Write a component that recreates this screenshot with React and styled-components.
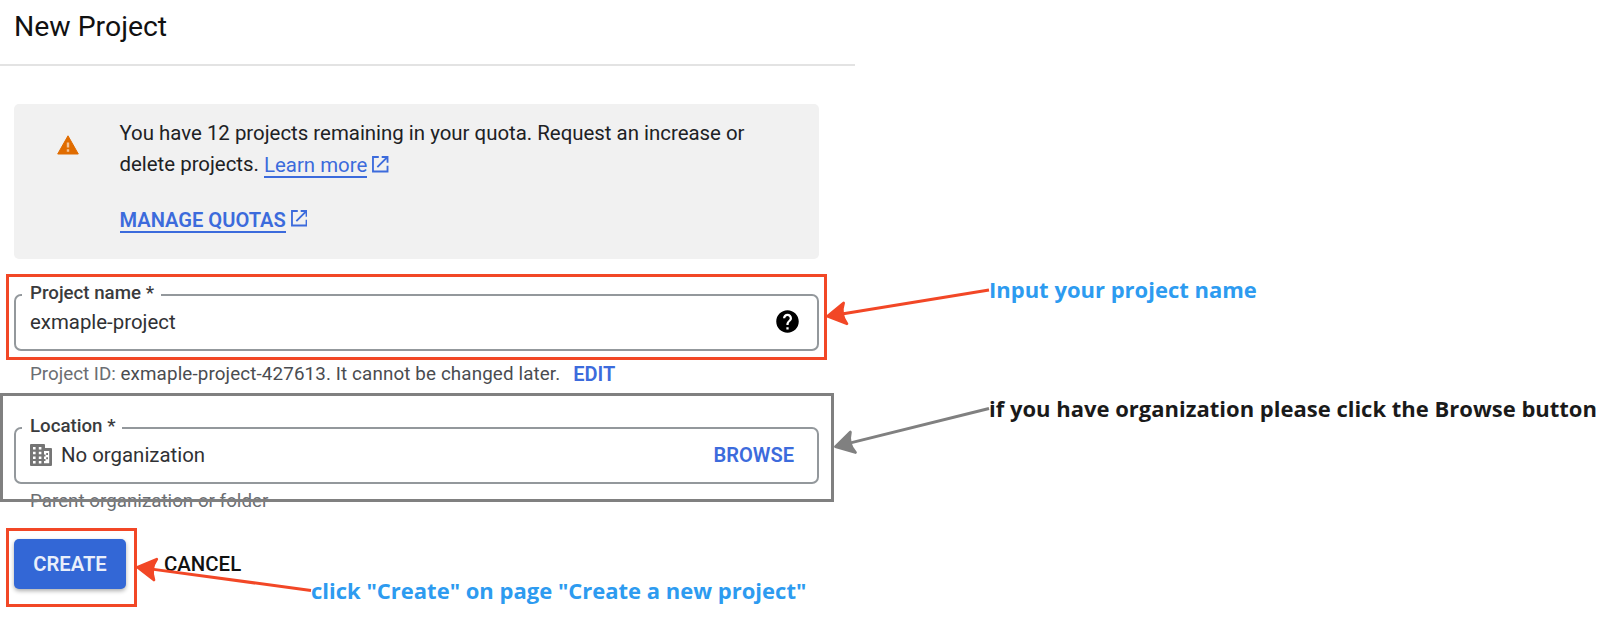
import React from "react";
import styled, { createGlobalStyle } from "styled-components";

const Global = createGlobalStyle`
  *, *::before, *::after { box-sizing: border-box; }
  body { margin: 0; background: #fff; font-family: Roboto, "Liberation Sans", sans-serif; color: #202124; }
`;

const Canvas = styled.div`
  position: relative;
  width: 1598px;
  height: 625px;
  overflow: hidden;
`;

const Page = styled.main`
  width: 855px;
`;

const Header = styled.header`
  height: 66px;
  padding: 10px 0 0 14px;
  border-bottom: 2px solid #e3e3e3;
`;

const Title = styled.h1`
  margin: 0;
  font-size: 28.4px;
  line-height: 33px;
  font-weight: 400;
  color: #111;
`;

const Form = styled.form`
  display: flex;
  flex-direction: column;
  padding: 38px 36px 0 14px;
`;

const Notice = styled.section`
  display: flex;
  height: 155px;
  padding: 14px 0 0 43px;
  border-radius: 5px;
  background: #f1f1f1;

  > svg { flex: none; margin-top: 17px; }
`;

const NoticeBody = styled.div`
  margin-left: 40.5px;
  font-size: 20.42px;
  line-height: 31px;
`;

const NoticeLine = styled.div`
  display: flex;
  align-items: center;
  white-space: pre;
  height: 31px;
  margin-top: ${(p) => (p.$spaced ? "24px" : "0")};
`;

const Link = styled.a`
  height: 28px;
  line-height: 30px;
  margin-top: -1px;
  color: #3c6bdc;
  border-bottom: 2px solid #3c6bdc;
  font-weight: ${(p) => (p.$strong ? 600 : 400)};
  font-size: ${(p) => (p.$strong ? "20.1px" : "inherit")};
`;

const Field = styled.div`
  display: flex;
  align-items: center;
  position: relative;
  height: 57px;
  margin-top: ${(p) => p.$top};
  padding: 0 ${(p) => p.$end} 2px 14px;
  border: 2px solid #93989c;
  border-radius: 7px;
`;

const FieldLabel = styled.label`
  position: absolute;
  top: -14px;
  left: 6px;
  height: 24px;
  padding: 0 7px 0 8px;
  background: #fff;
  font-size: 18.7px;
  line-height: 23px;
  font-weight: 500;
  white-space: nowrap;
  color: #3a3b3d;
`;

const Value = styled.span`
  flex: 1;
  margin-left: ${(p) => p.$indent || "0"};
  font-size: 20.4px;
  line-height: 24px;
  color: #303134;
`;

const TextButton = styled.button`
  padding: 0;
  border: 0;
  background: none;
  font: 600 20.1px / 24px Roboto, sans-serif;
  color: ${(p) => p.$color || "#3c6bdc"};
`;

const CancelButton = styled(TextButton)`
  font-weight: 500;
  font-size: 20.4px;
`;

const Hint = styled.p`
  display: flex;
  margin: ${(p) => p.$top} 0 0 16px;
  font-size: 18.8px;
  line-height: 24px;
  color: #6b6e72;
  white-space: pre;

  b { font-weight: 400; letter-spacing: 0.13px; color: #4a4c50; }
  button { margin-left: 13px; font-size: 20px; }
`;

const Actions = styled.div`
  display: flex;
  align-items: center;
  gap: 38px;
  margin-top: 26px;
`;

const Primary = styled.button`
  width: 112px;
  height: 50px;
  padding: 0;
  border: 0;
  border-radius: 5px;
  background: #3367d6;
  color: #e9effb;
  box-shadow: 0 2px 4px rgba(0, 0, 0, 0.32);
  font: 600 20.2px / 24px Roboto, sans-serif;
`;

const Highlight = styled.div`
  position: absolute;
  left: ${(p) => p.$x}px;
  top: ${(p) => p.$y}px;
  width: ${(p) => p.$w}px;
  height: ${(p) => p.$h}px;
  border: 3px solid ${(p) => p.$color};
`;

const Arrows = styled.svg`
  position: absolute;
  inset: 0;
`;

const Note = styled.div`
  position: absolute;
  left: ${(p) => p.$x}px;
  top: ${(p) => p.$y}px;
  font: 700 22px / 30px "Open Sans", sans-serif;
  color: ${(p) => p.$color || "#2d9bf0"};
  white-space: nowrap;
`;

const ExternalIcon = styled.svg`
  margin-left: 5px;
  margin-top: ${(p) => p.$lift};
`;

const External = ({ lift }) => (
  <ExternalIcon $lift={lift} width="16.500" height="16.500" viewBox="0 0 17 17" fill="none" stroke="#3c6bdc" strokeWidth="1.9">
    <path d="M7 1H1v15h15V10M10 1h6v6M16 1L5.5 11.5" />
  </ExternalIcon>
);

const Warning = () => (
  <svg width="22" height="20" viewBox="0 0 22 20">
    <path d="M11 .8L21.3 19H.7z" fill="#e06c00" stroke="#e06c00" strokeWidth="1" strokeLinejoin="round" />
    <path d="M11 7.500v5M11 14.300v2.400" stroke="#f3c294" strokeWidth="2.400" />
  </svg>
);

const Help = () => (
  <svg width="27" height="27" viewBox="0 0 24 24">
    <path fill="#000" d="M12 2C6.48 2 2 6.48 2 12s4.480 10 10 10 10-4.480 10-10S17.520 2 12 2zm1 17h-2v-2h2v2zm2.070-7.750l-.9.920C13.450 12.900 13 13.500 13 15h-2v-.5c0-1.100.45-2.100 1.170-2.830l1.240-1.260c.37-.36.59-.86.59-1.410 0-1.100-.9-2-2-2s-2 .9-2 2H8c0-2.210 1.790-4 4-4s4 1.790 4 4c0 .88-.36 1.680-.93 2.250z" />
  </svg>
);

const Building = () => (
  <svg width="22" height="22" viewBox="0 0 22 22">
    <path d="M1 0h13a1 1 0 0 1 1 1v3h6a1 1 0 0 1 1 1v16a1 1 0 0 1-1 1H1a1 1 0 0 1-1-1V1a1 1 0 0 1 1-1z" fill="#757575" />
    <path d="M3 3h2.600v2.500H3zM8.800 3h2.600v2.500H8.800zM3 7.800h2.600v2.500H3zM8.800 7.800h2.600v2.500H8.800zM3 12.400h2.600v2.500H3zM8.800 12.400h2.600v2.500H8.800zM3 17h2.600v2.500H3zM8.800 17h2.600v2.500H8.800zM14 7h5.200v12.300H14v-2.300h1.500v-2H14v-2.500h1.500v-2H14z" fill="#fff" />
    <path d="M16.200 9h1.800v2h-1.800zM16.200 13.300h1.800v2h-1.800z" fill="#757575" />
  </svg>
);

const Arrow = ({ from, to, color }) => {
  const angle = (Math.atan2(from[1] - to[1], from[0] - to[0]) * 180) / Math.PI;
  const length = Math.hypot(from[0] - to[0], from[1] - to[1]);
  return (
    <g transform={`translate(${to[0]} ${to[1]}) rotate(${angle})`} fill={color} stroke={color}>
      <path d={`M16 0H${length}`} strokeWidth="3" />
      <path d="M1.500 0L19.500-10.500Q14 0 19.500 10.500z" strokeWidth="2.800" strokeLinejoin="round" />
    </g>
  );
};

export default function App() {
  return (
    <Canvas>
      <Global />
      <Page>
        <Header>
          <Title>New Project</Title>
        </Header>
        <Form>
          <Notice>
            <Warning />
            <NoticeBody>
              <NoticeLine>You have 12 projects remaining in your quota. Request an increase or</NoticeLine>
              <NoticeLine>
                {"delete projects. "}
                <Link>Learn more</Link>
                <External lift="0" />
              </NoticeLine>
              <NoticeLine $spaced>
                <Link $strong>MANAGE QUOTAS</Link>
                <External lift="-2px" />
              </NoticeLine>
            </NoticeBody>
          </Notice>
          <Field $top="35px" $end="16px">
            <FieldLabel>Project name *</FieldLabel>
            <Value>exmaple-project</Value>
            <Help />
          </Field>
          <Hint $top="11px">
            Project ID: <b>exmaple-project-427613. It cannot be changed later.</b>
            <TextButton type="button">EDIT</TextButton>
          </Hint>
          <Field $top="41px" $end="23px">
            <FieldLabel>Location *</FieldLabel>
            <Building />
            <Value $indent="9px">No organization</Value>
            <TextButton type="button">BROWSE</TextButton>
          </Field>
          <Hint $top="5px">Parent organization or folder</Hint>
          <Actions>
            <Primary type="button">CREATE</Primary>
            <CancelButton type="button" $color="#111">CANCEL</CancelButton>
          </Actions>
        </Form>
      </Page>
      <Highlight $x={6} $y={274} $w={821} $h={86} $color="#f24726" />
      <Highlight $x={0} $y={393} $w={834} $h={109} $color="#808080" />
      <Highlight $x={6} $y={528} $w={131} $h={79} $color="#f24726" />
      <Arrows width="1598" height="625">
        <Arrow from={[989, 290]} to={[826, 316.5]} color="#f24726" />
        <Arrow from={[989, 408.5]} to={[834, 447]} color="#808080" />
        <Arrow from={[311, 590.5]} to={[136, 567]} color="#f24726" />
      </Arrows>
      <Note $x={989} $y={274}>Input your project name</Note>
      <Note $x={989} $y={393} $color="#1a1a1a">if you have organization please click the Browse button</Note>
      <Note $x={311} $y={575}>click "Create" on page "Create a new project"</Note>
    </Canvas>
  );
}
